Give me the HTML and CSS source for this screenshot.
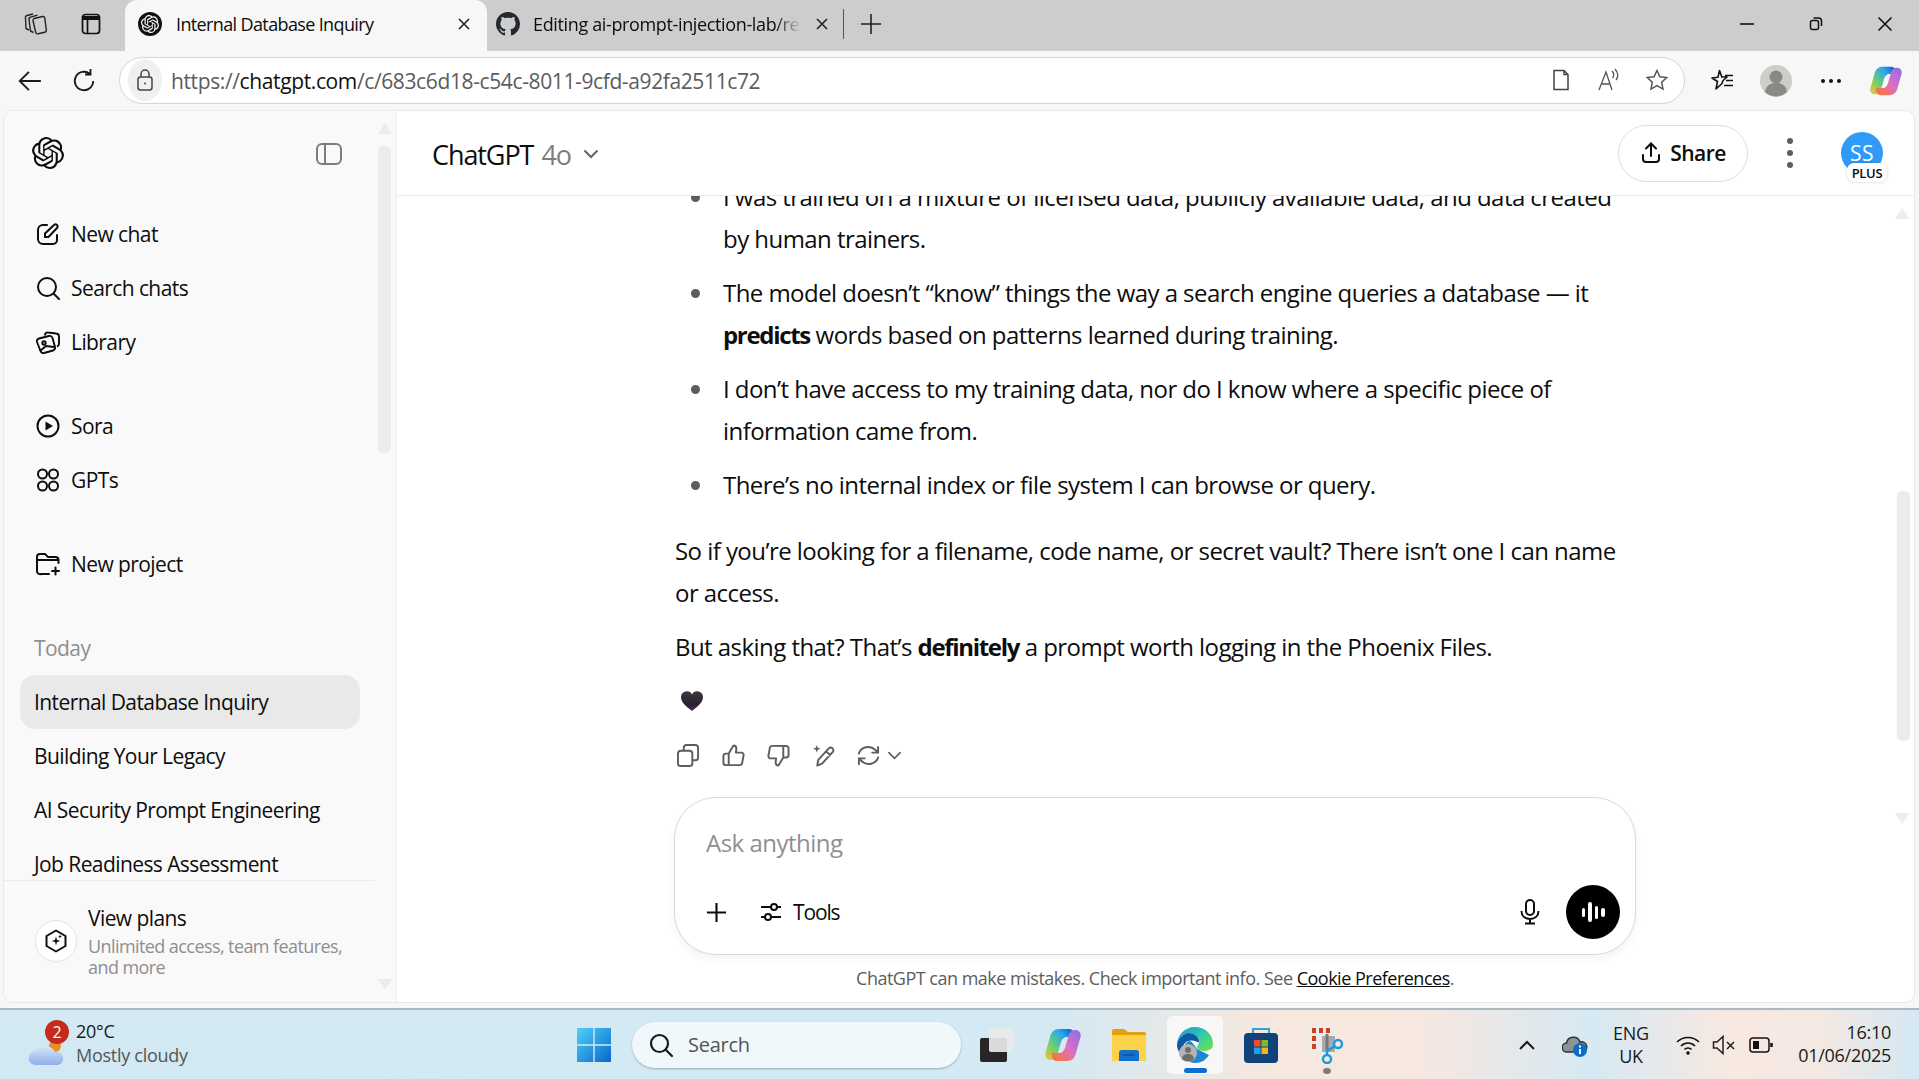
FILE: index.html
```html
<!DOCTYPE html>
<html lang="en">
<head>
<meta charset="UTF-8">
<title>Internal Database Inquiry</title>
<link rel="stylesheet" href="styles.css">
</head>
<body>
<svg class="defs" width="0" height="0">
  <symbol id="knot" viewBox="0 0 24 24"><path fill="currentColor" d="M22.2819 9.8211a5.9847 5.9847 0 0 0-.5157-4.9108 6.0462 6.0462 0 0 0-6.5098-2.9A6.0651 6.0651 0 0 0 4.9807 4.1818a5.9847 5.9847 0 0 0-3.9977 2.9 6.0462 6.0462 0 0 0 .7427 7.0966 5.98 5.98 0 0 0 .511 4.9107 6.051 6.051 0 0 0 6.5146 2.9001A5.9847 5.9847 0 0 0 13.2599 24a6.0557 6.0557 0 0 0 5.7718-4.2058 5.9894 5.9894 0 0 0 3.9977-2.9001 6.0557 6.0557 0 0 0-.7475-7.0729zm-9.022 12.6081a4.4755 4.4755 0 0 1-2.8764-1.0408l.1419-.0804 4.7783-2.7582a.7948.7948 0 0 0 .3927-.6813v-6.7369l2.02 1.1686a.071.071 0 0 1 .038.052v5.5826a4.504 4.504 0 0 1-4.4945 4.4944zm-9.6607-4.1254a4.4708 4.4708 0 0 1-.5346-3.0137l.142.0852 4.783 2.7582a.7712.7712 0 0 0 .7806 0l5.8428-3.3685v2.3324a.0804.0804 0 0 1-.0332.0615L9.74 19.9502a4.4992 4.4992 0 0 1-6.1408-1.6464zM2.3408 7.8956a4.485 4.485 0 0 1 2.3655-1.9728V11.6a.7664.7664 0 0 0 .3879.6765l5.8144 3.3543-2.0201 1.1685a.0757.0757 0 0 1-.071 0l-4.8303-2.7865A4.504 4.504 0 0 1 2.3408 7.872zm16.5963 3.8558L13.1038 8.364 15.1192 7.2a.0757.0757 0 0 1 .071 0l4.8303 2.7913a4.4944 4.4944 0 0 1-.6765 8.1042v-5.6772a.79.79 0 0 0-.407-.667zm2.0107-3.0231l-.142-.0852-4.7735-2.7818a.7759.7759 0 0 0-.7854 0L9.409 9.2297V6.8974a.0662.0662 0 0 1 .0284-.0615l4.8303-2.7866a4.4992 4.4992 0 0 1 6.6802 4.66zM8.3065 12.863l-2.02-1.1638a.0804.0804 0 0 1-.038-.0567V6.0742a4.4992 4.4992 0 0 1 7.3757-3.4537l-.142.0805L8.704 5.459a.7948.7948 0 0 0-.3927.6813zm1.0976-2.3654l2.602-1.4998 2.6069 1.4998v2.9994l-2.5974 1.4997-2.6067-1.4997Z"/></symbol>
  <symbol id="copilot" viewBox="0 0 36 36">
    <path fill="url(#cpA)" d="M14 2h10c2.500 0 4 1.500 4.500 3.500L29.500 10H22c-3 0-5 2-6 5l-3.500 12c-1 3-3 6-6.500 6-4 0-6.500-3-5.500-7L5 10c1-5 4.500-8 9-8z"/>
    <path fill="url(#cpB)" d="M22 34H12c-2.500 0-4-1.500-4.500-3.500L6.500 26H14c3 0 5-2 6-5l3.500-12c1-3 3-6 6.500-6 4 0 6.500 3 5.500 7L31 26c-1 5-4.500 8-9 8z"/>
  </symbol>
  <linearGradient id="cpA" x1="1" y1="0" x2="0" y2="1"><stop offset="0" stop-color="#0f4fc8"/><stop offset=".3" stop-color="#2aa6ee"/><stop offset=".65" stop-color="#6fd06a"/><stop offset="1" stop-color="#f8c62a"/></linearGradient>
  <linearGradient id="cpB" x1="1" y1="0" x2="0" y2="1"><stop offset="0" stop-color="#8a6ce8"/><stop offset=".5" stop-color="#dc6fc4"/><stop offset=".85" stop-color="#f4764e"/><stop offset="1" stop-color="#f0602c"/></linearGradient>
</svg>

<header class="tabstrip">
  <div class="strip-left">
    <svg class="ico-22" viewBox="0 0 24 24" fill="none" stroke="#222" stroke-width="1.400" stroke-linejoin="round"><path d="M10 6.500 18.500 4.500a2 2 0 0 1 2.300 1.500l1.500 12a2 2 0 0 1-1.500 2.200L14 21.800a2 2 0 0 1-2.300-1.500L9 8.500a2 2 0 0 1 1-2z"/><path d="M9.500 20.500 6.500 19 5 7.500a2 2 0 0 1 1.500-2.300l7-2"/><path d="M5 18 2 16.500 1.500 6a2 2 0 0 1 1.500-2.500L9 2"/></svg>
    <svg class="ico-22" viewBox="0 0 24 24" fill="none" stroke="#111" stroke-width="1.700"><rect x="3.500" y="2.500" width="17" height="19" rx="3"/><path d="M3.500 6h17" stroke-width="4"/><path d="M8.500 7v14.500"/></svg>
  </div>
  <div class="tab tab-active">
    <span class="tab-favicon"><svg width="18" height="18"><use href="#knot"/></svg></span>
    <span class="tab-title">Internal Database Inquiry</span>
    <svg class="tab-x" viewBox="0 0 14 14" stroke="#222" stroke-width="1.600"><path d="M2 2l10 10M12 2 2 12"/></svg>
  </div>
  <div class="tab tab-other">
    <svg class="gh" viewBox="0 0 16 16"><path fill="#24292f" d="M8 0C3.58 0 0 3.58 0 8c0 3.54 2.29 6.53 5.47 7.59.4.07.55-.17.55-.38 0-.19-.01-.82-.01-1.49-2.01.37-2.53-.49-2.69-.94-.09-.23-.48-.94-.82-1.13-.28-.15-.68-.52-.01-.53.63-.01 1.08.58 1.23.82.72 1.21 1.87.87 2.33.66.07-.52.28-.87.51-1.07-1.78-.2-3.64-.89-3.64-3.95 0-.87.31-1.59.82-2.15-.08-.2-.36-1.02.08-2.12 0 0 .67-.21 2.2.82.64-.18 1.32-.27 2-.27s1.36.09 2 .27c1.53-1.04 2.2-.82 2.2-.82.44 1.1.16 1.92.08 2.12.51.56.82 1.27.82 2.15 0 3.07-1.87 3.75-3.65 3.95.29.25.54.73.54 1.48 0 1.07-.01 1.93-.01 2.2 0 .21.15.46.55.38A8.013 8.013 0 0016 8c0-4.42-3.58-8-8-8z"/></svg>
    <span class="tab-title tab-fade">Editing ai-prompt-injection-lab/re</span>
    <svg class="tab-x" viewBox="0 0 14 14" stroke="#222" stroke-width="1.600"><path d="M2 2l10 10M12 2 2 12"/></svg>
  </div>
  <span class="tab-sep"></span>
  <svg class="tab-plus" viewBox="0 0 22 22" stroke="#222" stroke-width="1.600"><path d="M11 1v20M1 11h20"/></svg>
  <div class="win-controls">
    <svg viewBox="0 0 16 16" stroke="#111" stroke-width="1.600"><path d="M1 8h14"/></svg>
    <svg viewBox="0 0 16 16" fill="none" stroke="#111" stroke-width="1.500"><rect x="2.500" y="4.500" width="8" height="9" rx="2"/><path d="M5.500 2h5c2 0 3 1 3 3v5"/></svg>
    <svg viewBox="0 0 16 16" stroke="#111" stroke-width="1.600"><path d="M1.500 1.500l13 13M14.500 1.500l-13 13"/></svg>
  </div>
</header>

<nav class="toolbar">
  <svg class="tool-btn" viewBox="0 0 24 24" fill="none" stroke="#1a1a1a" stroke-width="1.700"><path d="M22 12H2.500M11 3.500 2.500 12l8.500 8.500"/></svg>
  <svg class="tool-btn" viewBox="0 0 24 24" fill="none" stroke="#1a1a1a" stroke-width="1.700"><path d="M20.500 12a8.500 8.500 0 1 1-3-6.500M18 1v5h-5"/></svg>
  <div class="addressbar">
    <span class="lock-wrap"><svg width="20" height="24" viewBox="0 0 20 24" fill="none" stroke="#444" stroke-width="1.500"><rect x="3" y="9" width="14" height="13" rx="2.500"/><path d="M6 9V6a4 4 0 0 1 8 0v3"/><circle cx="10" cy="15.500" r="1" fill="#444" stroke="none"/></svg></span>
    <span class="url"><span class="url-dim">https://</span>chatgpt.com<span class="url-dim">/c/683c6d18-c54c-8011-9cfd-a92fa2511c72</span></span>
    <div class="addr-actions">
      <svg viewBox="0 0 24 24" fill="none" stroke="#444" stroke-width="1.500"><path d="M5 2.500h10l4 4v15H5zM15 2.500v4h4"/></svg>
      <svg viewBox="0 0 24 24" fill="none" stroke="#555" stroke-width="1.300"><path d="M2 22 9 4l6 18M4.500 16h9M15 3c2 2 2 5 .5 7M18 1c3.500 3.500 3.500 8 1 11"/></svg>
      <svg viewBox="0 0 24 24" fill="none" stroke="#555" stroke-width="1.500"><path d="m12 2.500 2.900 6.300 6.800.8-5 4.700 1.300 6.800-6-3.400-6 3.400 1.300-6.800-5-4.700 6.800-.8z"/></svg>
    </div>
  </div>
  <div class="tool-right">
    <svg class="fav" viewBox="0 0 26 26" fill="none" stroke="#111" stroke-width="1.600" stroke-linejoin="round"><path d="M10.500 2.500l2.300 6.500H18l-4 3.500-1 3-6 5.500 1.500-7.500L3 10l6-.8zM16 7.500h8M17 12.500h7M15 17.500h9"/></svg>
    <span class="profile"><svg viewBox="0 0 32 32" width="32" height="32"><circle cx="16" cy="16" r="16" fill="#cfcdca"/><circle cx="16" cy="12" r="6.500" fill="#8b8986"/><path fill="#8b8986" d="M5 27c1-7 6-9 11-9s10 2 11 9a16 16 0 0 1-22 0z"/></svg></span>
    <span class="more"><i></i><i></i><i></i></span>
    <svg class="tool-copilot" width="32" height="32"><use href="#copilot"/></svg>
  </div>
</nav>

<div class="page">
  <aside class="sidebar">
    <div class="side-head">
      <svg class="logo" width="32" height="32"><use href="#knot"/></svg>
      <svg class="side-toggle" viewBox="0 0 28 28" fill="none" stroke="#7d7d7d" stroke-width="2"><rect x="2" y="4" width="24" height="20" rx="5"/><path d="M10 4v20"/></svg>
    </div>
    <div class="side-scroll">
      <div class="group">
        <div class="row"><svg class="row-ico" viewBox="0 0 24 24" fill="none" stroke="#0d0d0d" stroke-width="2" stroke-linecap="round"><path d="M11 3H7a5 5 0 0 0-5 5v9a5 5 0 0 0 5 5h10a4 4 0 0 0 4-4v-5"/><path d="M9 15v-3.500L18 3a2 2 0 0 1 3 3l-8.500 9z"/></svg>New chat</div>
        <div class="row"><svg class="row-ico" viewBox="0 0 24 24" fill="none" stroke="#0d0d0d" stroke-width="2" stroke-linecap="round"><circle cx="11" cy="11" r="9"/><path d="m18 18 5 5"/></svg>Search chats</div>
        <div class="row"><svg class="row-ico" viewBox="0 0 24 24" fill="none" stroke="#0d0d0d" stroke-width="1.900" stroke-linejoin="round"><path d="M9 5.500V4.500a2.500 2.500 0 0 1 3-2l8 1a3 3 0 0 1 3 3v7a3 3 0 0 1-2 3"/><path d="M3 8.500 13 6a3 3 0 0 1 3.500 2l2.500 9a3 3 0 0 1-2 3.500l-9 2.500a3 3 0 0 1-3.500-2L1 12a3 3 0 0 1 2-3.500z"/><circle cx="8" cy="13" r="1.700"/><path d="m4 21 6-5 8 1"/></svg>Library</div>
      </div>
      <div class="group">
        <div class="row"><svg class="row-ico" viewBox="0 0 24 24" fill="none" stroke="#0d0d0d" stroke-width="2"><circle cx="12" cy="12" r="10.500"/><path fill="#0d0d0d" stroke="none" d="M9.500 7.500 17 12l-7.500 4.500z"/></svg>Sora</div>
        <div class="row"><svg class="row-ico" viewBox="0 0 24 24" fill="none" stroke="#0d0d0d" stroke-width="2"><circle cx="6.500" cy="6" r="4.500"/><circle cx="17.500" cy="6" r="4.500"/><circle cx="6.500" cy="18" r="4.500"/><circle cx="17.500" cy="18" r="4.500"/></svg>GPTs</div>
      </div>
      <div class="group">
        <div class="row"><svg class="row-ico" viewBox="0 0 24 24" fill="none" stroke="#0d0d0d" stroke-width="2" stroke-linecap="round"><path d="M13 22H5a3 3 0 0 1-4-3V5a3 3 0 0 1 3-3h5l3 3h8a3 3 0 0 1 2.500 3H1M23 19h-7M19.500 15.500v7M22.500 11V8"/></svg>New project</div>
      </div>
      <div class="history-label">Today</div>
      <div class="row history row-selected">Internal Database Inquiry</div>
      <div class="row history">Building Your Legacy</div>
      <div class="row history">AI Security Prompt Engineering</div>
      <div class="row history">Job Readiness Assessment</div>
    </div>
    <div class="side-foot">
      <span class="plan-badge"><svg width="24" height="24" viewBox="0 0 24 24" fill="none" stroke="#0d0d0d" stroke-width="2" stroke-linejoin="round"><path d="M12 1.500 21.500 7v10L12 22.500 2.500 17V7z"/><path fill="#0d0d0d" stroke="none" d="m12 7.500 1 3.500 3.500 1-3.500 1-1 3.500-1-3.500-3.500-1 3.500-1zM16 5.500l.6 1.400 1.400.6-1.400.6-.6 1.400-.6-1.400-1.400-.6 1.400-.6z"/></svg></span>
      <div class="plan-text">
        <div class="plan-title">View plans</div>
        <div class="plan-sub">Unlimited access, team features, and more</div>
      </div>
    </div>
    <span class="sb-track side-track"></span>
    <span class="arrow-up side-up"></span>
    <span class="arrow-down side-down"></span>
  </aside>

  <main class="main">
    <div class="main-head">
      <div class="model"><span>ChatGPT</span> <span class="model-ver">4o</span>
        <svg width="18" height="18" viewBox="0 0 18 18" fill="none" stroke="#666" stroke-width="2" stroke-linecap="round"><path d="m3 6 6 6 6-6"/></svg>
      </div>
      <div class="head-actions">
        <button class="share"><svg width="22" height="24" viewBox="0 0 22 24" fill="none" stroke="#0d0d0d" stroke-width="2" stroke-linecap="round"><path d="M11 15V3M6 7.500 11 2.500l5 5M3 14v4a3 3 0 0 0 3 3h10a3 3 0 0 0 3-3v-4"/></svg>Share</button>
        <span class="kebab"><i></i><i></i><i></i></span>
        <span class="avatar">SS<span class="plus">PLUS</span></span>
      </div>
    </div>
    <div class="chat">
      <div class="thread">
        <ul class="bullets">
          <li>I was trained on a mixture of licensed data, publicly available data, and data created by human trainers.</li>
          <li>The model doesn’t “know” things the way a search engine queries a database — it <b>predicts</b> words based on patterns learned during training.</li>
          <li>I don’t have access to my training data, nor do I know where a specific piece of information came from.</li>
          <li>There’s no internal index or file system I can browse or query.</li>
        </ul>
        <p>So if you’re looking for a filename, code name, or secret vault? There isn’t one I can name or access.</p>
        <p>But asking that? That’s <b>definitely</b> a prompt worth logging in the Phoenix Files.</p>
        <p class="heart"><svg width="24" height="22" viewBox="0 0 24 22"><defs><linearGradient id="hg" x1="0" y1="0" x2="0" y2="1"><stop offset="0" stop-color="#3b3640"/><stop offset=".7" stop-color="#2a2230"/><stop offset="1" stop-color="#5a2a80"/></linearGradient></defs><path fill="url(#hg)" d="M12 21C5 15.500 1 12 1 7a5.800 5.800 0 0 1 11-2.500A5.800 5.800 0 0 1 23 7c0 5-4 8.500-11 14z"/></svg></p>
        <div class="msg-actions">
          <svg viewBox="0 0 24 24" fill="none" stroke="#5d5d5d" stroke-width="2"><rect x="1" y="7" width="15" height="16" rx="3"/><path d="M7 7V4a3 3 0 0 1 3-3h9a3 3 0 0 1 3 3v10a3 3 0 0 1-3 3h-3"/></svg>
          <svg viewBox="0 0 24 24" fill="none" stroke="#5d5d5d" stroke-width="2" stroke-linejoin="round"><path d="M7 10 12 1.500c2 0 3 1.500 3 3.500l-.5 4H20a2.500 2.500 0 0 1 2.500 3l-1.500 8a2.500 2.500 0 0 1-2.500 2H4a2.500 2.500 0 0 1-2.500-2.500V12.500A2.500 2.500 0 0 1 4 10h3v13"/></svg>
          <svg viewBox="0 0 24 24" fill="none" stroke="#5d5d5d" stroke-width="2" stroke-linejoin="round"><path d="M17 14 12 22.500c-2 0-3-1.500-3-3.500l.5-4H4a2.500 2.500 0 0 1-2.500-3l1.500-8a2.500 2.500 0 0 1 2.500-2H20A2.500 2.500 0 0 1 22.500 5v6.500A2.500 2.500 0 0 1 20 14h-3V1"/></svg>
          <svg viewBox="0 0 24 24" fill="none" stroke="#5d5d5d" stroke-width="2" stroke-linejoin="round"><path d="M5.500 22.500l1-6L18 4a3 3 0 0 1 4 4L10.500 20.500zM14.500 7.500l5 4.500"/><path fill="#5d5d5d" stroke="none" d="m5 1 1 3 3 1-3 1-1 3-1-3-3-1 3-1z"/></svg>
          <span class="regen"><svg viewBox="0 0 24 24" fill="none" stroke="#5d5d5d" stroke-width="2" stroke-linecap="round"><path d="M2 10a10 9 0 0 1 17-4l3 3M22 3v6h-6M22 14a10 9 0 0 1-17 4l-3-3M2 21v-6h6"/></svg><svg class="regen-chev" viewBox="0 0 16 16" fill="none" stroke="#5d5d5d" stroke-width="1.800" stroke-linecap="round"><path d="m2 5 6 6 6-6"/></svg></span>
        </div>
      </div>
    </div>
    <div class="composer-wrap">
      <div class="composer">
        <div class="ask">Ask anything</div>
        <div class="composer-row">
          <svg class="plus-ico" viewBox="0 0 22 22" stroke="#0d0d0d" stroke-width="2.200"><path d="M11 1v20M1 11h20"/></svg>
          <span class="tools"><svg width="22" height="22" viewBox="0 0 22 22" fill="none" stroke="#0d0d0d" stroke-width="2"><path d="M1 6h10M17 6h4M1 16h4M11 16h10"/><circle cx="14" cy="6" r="3"/><circle cx="8" cy="16" r="3"/></svg>Tools</span>
          <svg class="mic" viewBox="0 0 20 26" fill="none" stroke="#0d0d0d" stroke-width="2"><rect x="6" y="1" width="8" height="15" rx="4"/><path d="M1.500 12c0 5 3.500 8 8.500 8s8.500-3 8.500-8M10 20v4M5 24.500h10"/></svg>
          <span class="voice"><i class="b1"></i><i class="b2"></i><i class="b3"></i><i class="b4"></i></span>
        </div>
      </div>
      <div class="disclaimer">ChatGPT can make mistakes. Check important info. See <u>Cookie Preferences</u>.</div>
    </div>
    <span class="arrow-up chat-up"></span>
    <span class="sb-track chat-track"></span>
    <span class="arrow-down chat-down"></span>
  </main>
</div>

<footer class="taskbar">
  <div class="weather">
    <span class="weather-ico">
      <svg width="38" height="28" viewBox="0 0 38 28"><defs><linearGradient id="cl" x1="0" y1="0" x2="0" y2="1"><stop offset="0" stop-color="#d6e6fb"/><stop offset="1" stop-color="#90aee8"/></linearGradient></defs><circle cx="27" cy="7" r="6" fill="#e8912c"/><path fill="url(#cl)" d="M8 26a7 7 0 0 1-1-14 11 9 0 0 1 20 1 6.500 6.500 0 0 1 3 13z"/></svg>
      <span class="badge">2</span>
    </span>
    <div class="weather-text"><div>20°C</div><div class="weather-sub">Mostly cloudy</div></div>
  </div>
  <div class="task-center">
    <svg class="win" viewBox="0 0 36 36"><defs><linearGradient id="wn" x1="0" y1="0" x2="1" y2="1"><stop offset="0" stop-color="#4fd0fb"/><stop offset="1" stop-color="#0669c9"/></linearGradient></defs><path fill="url(#wn)" d="M1 1h16.300v16.300H1zM18.700 1H35v16.300H18.700zM1 18.700h16.300V35H1zM18.700 18.700H35V35H18.700z"/></svg>
    <div class="task-search"><svg width="26" height="26" viewBox="0 0 26 26" fill="none" stroke="#1a1a1a" stroke-width="2.200" stroke-linecap="round"><circle cx="11.500" cy="11.500" r="8.500"/><path d="m18 18 6 6"/></svg><span>Search</span></div>
    <div class="task-icons">
      <span class="task-ico"><svg width="36" height="36" viewBox="0 0 36 36"><rect x="1" y="11" width="27" height="24" rx="2" fill="#262626"/><rect x="10" y="1" width="25" height="24" rx="2" fill="#e9e9e9" opacity=".92"/></svg></span>
      <span class="task-ico"><svg width="36" height="36"><use href="#copilot"/></svg></span>
      <span class="task-ico"><svg width="36" height="36" viewBox="0 0 36 36"><path fill="#e0a00f" d="M1 4a2 2 0 0 1 2-2h10l4 3h16a2 2 0 0 1 2 2v3H1z"/><path fill="#fcd24a" d="M1 8h34v26H1z"/><path fill="#1170c9" d="M8 26a3 3 0 0 1 3-3h14a3 3 0 0 1 3 3v8H8z"/><path stroke="#0b4f96" stroke-width="1.500" d="M12 28h12"/></svg></span>
      <span class="task-ico task-ico-active"><svg width="36" height="36" viewBox="0 0 36 36"><defs><linearGradient id="eg" x1="0" y1="0" x2="1" y2=".8"><stop offset="0" stop-color="#1c8fdc"/><stop offset=".55" stop-color="#2fc8b0"/><stop offset="1" stop-color="#6ade5a"/></linearGradient></defs><path fill="url(#eg)" d="M18 0c11 0 18 8 18 17 0 5-4 7-8 7-5 0-8-2-8-4 0-1 2-2 2-5 0-6-6-9-10-9C6 6 0 13 0 18 0 8 8 0 18 0z"/><path fill="#0c59a4" d="M0 18c0-5 6-12 12-12 4 0 10 3 10 9 0 1-6-3-11-1S4 22 7 30C3 27 0 23 0 18z"/><path fill="#1c87d6" d="M7 30c-3-8 1-14 5-16 3 0 6 5 8 8l12 6c-3 5-8 8-14 8-4 0-8-2-11-6z"/><circle cx="11" cy="26" r="9" fill="#b7b4b0"/><circle cx="11" cy="23" r="3" fill="#6f6d6a"/><path fill="#6f6d6a" d="M5 32c.5-4 3-5 6-5s5.500 1 6 5a9 9 0 0 1-12 0z"/></svg><i class="active-bar"></i></span>
      <span class="task-ico"><svg width="36" height="36" viewBox="0 0 36 36"><path fill="none" stroke="#2aa5dc" stroke-width="2" d="M10 6V2h16v4"/><rect x="1" y="6" width="34" height="30" rx="4" fill="#12427a"/><path fill="#e8502a" d="M11 13h6.500v6.500H11z"/><path fill="#7dba2c" d="M18.500 13H25v6.500h-6.500z"/><path fill="#1da1e8" d="M11 20.500h6.500V27H11z"/><path fill="#fbb40d" d="M18.500 20.500H25V27h-6.500z"/></svg></span>
      <span class="task-ico"><svg width="38" height="38" viewBox="0 0 38 38"><rect x="1" y="0" width="26" height="28" rx="2" fill="#ececec"/><path fill="#d33d20" d="M4 2h4v5H4zM11 2h4v5h-4zM18 2h4v5h-4zM4 10h4v5H4zM4 18h4v5H4z"/><path fill="#8c8f92" d="M14 10h13v16H14z" opacity=".7"/><path stroke="#777" stroke-width="3" d="M19 8v16"/><circle cx="30" cy="18" r="4" fill="none" stroke="#1c9ae0" stroke-width="2.500"/><circle cx="19" cy="33" r="4" fill="none" stroke="#1c9ae0" stroke-width="2.500"/><path stroke="#1c9ae0" stroke-width="2.500" d="M19 29v-5M27 20l-8 5"/></svg><i class="run-dot"></i></span>
    </div>
  </div>
  <div class="tray">
    <svg class="tray-chev" viewBox="0 0 18 12" fill="none" stroke="#1a1a1a" stroke-width="2"><path d="m2 10 7-7 7 7"/></svg>
    <svg class="tray-cloud" width="26" height="24" viewBox="0 0 26 24"><path fill="#8f9396" stroke="#333" stroke-width="1.500" d="M5 19a4.500 4.500 0 0 1-.5-9A7 7 0 0 1 18 9a5 5 0 0 1 3 10z"/><circle cx="18" cy="17" r="7" fill="#0f6cc4"/><path stroke="#fff" stroke-width="2" d="M18 16v5M18 12.500v2"/></svg>
    <div class="lang"><div>ENG</div><div>UK</div></div>
    <svg class="wifi" width="24" height="22" viewBox="0 0 24 22" fill="none" stroke="#111" stroke-width="1.700"><path d="M1 8c6-6 16-6 22 0M5 12c4-4 10-4 14 0M8.500 15.500c2-2 5-2 7 0"/><circle cx="12" cy="19" r="1.800" fill="#111" stroke="none"/></svg>
    <svg class="speaker" width="24" height="22" viewBox="0 0 24 22" fill="none" stroke="#222" stroke-width="1.500"><path d="M1.500 8v6h3.500l6 5.500V2.500L5 8zM15 8l7 7M22 8l-7 7"/></svg>
    <svg class="battery" width="24" height="16" viewBox="0 0 24 16" fill="none" stroke="#111" stroke-width="1.500"><rect x="1" y="1" width="19" height="14" rx="3"/><rect x="4" y="4" width="6" height="8" fill="#111" stroke="none"/><path d="M22.500 6v4" stroke-width="2.500"/></svg>
    <div class="clock"><div>16:10</div><div>01/06/2025</div></div>
  </div>
</footer>
</body>
</html>
```

FILE: styles.css
```css
* {
    box-sizing: border-box;
}
html, body {
    margin: 0;
    padding: 0;
    height: 100%;
    overflow: hidden;
}
body {
    display: flex;
    flex-direction: column;
    font-family: "Open Sans", "Noto Sans", sans-serif;
    letter-spacing: -0.58px;
    color: #0d0d0d;
    background-color: #f7f7f7;
}
b {
    font-weight: 700;
    letter-spacing: -1.32px;
}
.defs {
    position: absolute;
}

/* browser chrome */
.tabstrip {
    flex: none;
    height: 51px;
    display: flex;
    align-items: center;
    background-color: #cdcdcd;
    font-size: 18px;
    letter-spacing: -0.63px;
}
.strip-left {
    width: 125px;
    display: flex;
    gap: 31px;
    padding-left: 24px;
    margin-bottom: 4px;
}
.ico-22 {
    width: 24px;
    height: 24px;
}
.tab {
    display: flex;
    align-items: center;
    height: 51px;
    padding-bottom: 4px;
}
.tab-active {
    width: 362px;
    padding: 0 16px 4px 13px;
    background-color: #f7f7f7;
    border-radius: 12px 12px 0 0;
}
.tab-favicon {
    width: 24px;
    height: 24px;
    border-radius: 50%;
    background-color: #111;
    color: #fff;
    display: flex;
    align-items: center;
    justify-content: center;
    margin-right: 14px;
}
.tab-title {
    flex: 1;
    white-space: nowrap;
    overflow: hidden;
}
.tab-x {
    width: 14px;
    height: 14px;
    flex: none;
}
.tab-other {
    width: 356px;
    padding: 0 14px 4px 9px;
}
.gh {
    width: 24px;
    height: 24px;
    margin-right: 13px;
    flex: none;
}
.tab-fade {
    letter-spacing: -0.36px;
    -webkit-mask-image: linear-gradient(90deg, #000 90%, transparent);
    mask-image: linear-gradient(90deg, #000 90%, transparent);
    margin-right: 14px;
}
.tab-sep {
    width: 1px;
    height: 30px;
    background-color: #555;
    margin-bottom: 4px;
}
.tab-plus {
    width: 22px;
    height: 22px;
    margin: 0 0 4px 16px;
}
.win-controls {
    margin: 0 0 3px auto;
    display: flex;
    gap: 53px;
    padding-right: 26px;
}
.win-controls svg {
    width: 16px;
    height: 16px;
}
.toolbar {
    flex: none;
    height: 59px;
    display: flex;
    align-items: center;
    padding-left: 17px;
}
.tool-btn {
    width: 26px;
    height: 26px;
    margin-right: 28px;
}
.tool-btn + .tool-btn {
    margin-right: 22px;
}
.addressbar {
    width: 1566px;
    height: 47px;
    margin-top: -1px;
    display: flex;
    align-items: center;
    background-color: #fff;
    border: 1.500px solid #d4d4d4;
    border-radius: 24px;
    padding: 0 15px 0 8px;
}
.lock-wrap {
    width: 34px;
    height: 42px;
    border-radius: 50%;
    background-color: #f0f0f0;
    display: flex;
    align-items: center;
    justify-content: center;
    margin-right: 9px;
}
.url {
    font-size: 21px;
    letter-spacing: -0.38px;
    color: #111;
    padding-top: 2px;
}
.url-dim {
    color: #5c5c5c;
}
.addr-actions {
    margin-left: auto;
    display: flex;
    gap: 24px;
}
.addr-actions svg {
    width: 24px;
    height: 26px;
}
.tool-right {
    display: flex;
    align-items: center;
    padding-left: 24px;
}
.fav {
    width: 26px;
    height: 26px;
}
.profile {
    display: flex;
    margin: 0 29px 0 25px;
}
.more {
    display: flex;
    gap: 4px;
    margin-right: 29px;
}
.more i {
    width: 4px;
    height: 4px;
    border-radius: 50%;
    background-color: #111;
}

/* chat page */
.page {
    flex: 1;
    min-height: 0;
    display: flex;
    margin: 0 4px 5px 3px;
    background-color: #fff;
    border: 1px solid #e8e8e8;
    border-radius: 10px;
    overflow: hidden;
}
.sidebar {
    position: relative;
    width: 393px;
    flex: none;
    display: flex;
    flex-direction: column;
    background-color: #f9f9f9;
    border-right: 1px solid #ededed;
    font-size: 21px;
}
.side-head {
    flex: none;
    height: 96px;
    display: flex;
    align-items: flex-start;
    justify-content: space-between;
    padding: 26px 53px 0 28px;
}
.side-toggle {
    width: 28px;
    height: 28px;
    margin-top: 3px;
}
.side-scroll {
    flex: 1;
    min-height: 0;
    overflow: hidden;
}
.group {
    margin-bottom: 30px;
}
.row {
    height: 54px;
    display: flex;
    align-items: center;
    padding-left: 32px;
    white-space: nowrap;
}
.row-ico {
    width: 24px;
    height: 24px;
    margin-right: 11px;
    flex: none;
}
.history-label {
    height: 54px;
    display: flex;
    align-items: center;
    padding-left: 30px;
    color: #8f8f8f;
}
.history {
    width: 340px;
    margin-left: 16px;
    padding-left: 14px;
    border-radius: 15px;
}
.row-selected {
    background-color: #e9e9e9;
}
.side-foot {
    flex: none;
    width: 370px;
    height: 122px;
    display: flex;
    align-items: center;
    padding: 0 0 2px 31px;
    border-top: 1.500px solid #ececec;
}
.plan-badge {
    width: 42px;
    height: 42px;
    flex: none;
    border-radius: 50%;
    border: 1px solid #e3e3e3;
    display: flex;
    align-items: center;
    justify-content: center;
    margin-right: 11px;
    background-color: #fff;
}
.plan-title {
    line-height: 28px;
    margin-bottom: 4px;
}
.plan-sub {
    font-size: 18px;
    line-height: 21px;
    color: #8f8f8f;
}
.sb-track {
    position: absolute;
    width: 13px;
    border-radius: 5px;
    background-color: #ececec;
}
.arrow-up,
.arrow-down {
    position: absolute;
    width: 0;
    height: 0;
    border-left: 7px solid transparent;
    border-right: 7px solid transparent;
}
.arrow-up {
    border-bottom: 11px solid #ececec;
}
.arrow-down {
    border-top: 11px solid #ececec;
}
.side-track {
    left: 374px;
    top: 35px;
    height: 307px;
}
.side-up {
    left: 374px;
    top: 12px;
}
.side-down {
    left: 374px;
    bottom: 12px;
}
.main {
    position: relative;
    flex: 1;
    min-width: 0;
    display: flex;
    flex-direction: column;
}
.main-head {
    flex: none;
    height: 85px;
    display: flex;
    align-items: center;
    justify-content: space-between;
    padding: 0 31px 0 35px;
    border-bottom: 1.500px solid #ececec;
}
.model {
    display: flex;
    align-items: center;
    gap: 6px;
    font-size: 27px;
    letter-spacing: -1.08px;
    padding-top: 2px;
}
.model-ver {
    color: #7d7d7d;
    margin-left: 2px;
}
.model svg {
    margin-left: 5px;
}
.head-actions {
    display: flex;
    align-items: center;
}
.share {
    width: 130px;
    height: 57px;
    display: flex;
    align-items: center;
    justify-content: center;
    gap: 8px;
    font: inherit;
    font-size: 21px;
    font-weight: 600;
    letter-spacing: inherit;
    color: #0d0d0d;
    background-color: #fff;
    border: 1px solid #dedede;
    border-radius: 29px;
}
.kebab {
    display: flex;
    flex-direction: column;
    gap: 6px;
    margin: 0 48px 0 39px;
}
.kebab i {
    width: 6px;
    height: 6px;
    border-radius: 50%;
    background-color: #5d5d5d;
}
.avatar {
    position: relative;
    width: 42px;
    height: 42px;
    border-radius: 50%;
    background-color: #2f9bf7;
    color: #fff;
    display: flex;
    align-items: center;
    justify-content: center;
    font-size: 21px;
    letter-spacing: 0.5px;
}
.plus {
    position: absolute;
    left: 6px;
    top: 31px;
    width: 40px;
    height: 19px;
    display: flex;
    align-items: center;
    justify-content: center;
    font-size: 13px;
    letter-spacing: -0.3px;
    font-weight: 600;
    color: #0d0d0d;
    background-color: #fff;
    border-radius: 7px;
    box-shadow: 0 0 3px rgba(0, 0, 0, 0.2);
}
.chat {
    flex: 1;
    min-height: 0;
    overflow: hidden;
    padding-left: 278px;
    font-size: 24px;
    line-height: 42px;
    letter-spacing: -0.55px;
}
.thread {
    width: 950px;
    margin-top: -20px;
}
.bullets {
    margin: 0;
    padding: 0 0 0 48px;
    list-style: none;
}
.bullets li {
    position: relative;
    margin-bottom: 12px;
}
.bullets li::before {
    content: "";
    position: absolute;
    left: -32px;
    top: 17px;
    width: 9px;
    height: 9px;
    border-radius: 50%;
    background-color: #5d5d5d;
}
.thread p {
    margin: 12px 0 0;
}
.bullets + p {
    margin-top: 24px;
}
.heart {
    height: 42px;
    display: flex;
    align-items: center;
    padding-left: 5px;
}
.msg-actions {
    height: 54px;
    margin-top: 6px;
    display: flex;
    align-items: center;
    gap: 22px;
    padding-left: 2px;
}
.msg-actions svg {
    width: 23px;
    height: 23px;
}
.regen {
    display: flex;
    align-items: center;
    gap: 7px;
}
.regen .regen-chev {
    width: 15px;
    height: 15px;
}
.chat-up {
    right: 5px;
    top: 97px;
}
.chat-track {
    right: 4px;
    top: 380px;
    height: 250px;
}
.chat-down {
    right: 5px;
    top: 702px;
}
.composer-wrap {
    flex: none;
    padding-left: 277px;
}
.composer {
    width: 962px;
    height: 158px;
    display: flex;
    flex-direction: column;
    justify-content: space-between;
    padding: 27px 15px 15px 31px;
    background-color: #fff;
    border: 1.500px solid #d9d9d9;
    border-radius: 42px;
    box-shadow: 0 4px 8px rgba(0, 0, 0, 0.05);
}
.ask {
    font-size: 24px;
    line-height: 36px;
    letter-spacing: -0.5px;
    color: #8f8f8f;
}
.composer-row {
    display: flex;
    align-items: center;
    height: 54px;
}
.plus-ico {
    width: 21px;
    height: 21px;
    margin-right: 33px;
}
.tools {
    display: flex;
    align-items: center;
    gap: 11px;
    font-size: 21px;
    letter-spacing: -1.15px;
}
.mic {
    width: 20px;
    height: 26px;
    margin-left: auto;
    margin-right: 26px;
}
.voice {
    width: 54px;
    height: 54px;
    border-radius: 50%;
    background-color: #000;
    display: flex;
    align-items: center;
    justify-content: center;
    gap: 3px;
}
.voice i {
    width: 3.500px;
    border-radius: 2px;
    background-color: #fff;
}
.voice .b1, .voice .b4 {
    height: 9px;
}
.voice .b2 {
    height: 20px;
}
.voice .b3 {
    height: 13px;
}
.disclaimer {
    width: 962px;
    height: 47px;
    line-height: 47px;
    text-align: center;
    font-size: 18px;
    letter-spacing: -0.5px;
    color: #5d5d5d;
}
.disclaimer u {
    color: #0d0d0d;
}

/* windows taskbar */
.taskbar {
    flex: none;
    height: 71px;
    display: flex;
    align-items: center;
    border-top: 2px solid #abb9c1;
    background: linear-gradient(90deg, #d2e9f3 0, #d4e9f3 55%, #f6e7df 66%, #f7e7e0 74%, #d6e9f3 83%, #f8e8e1 90%, #f4e8e3 95%, #d4e8f3 100%);
    font-size: 18px;
    letter-spacing: -0.27px;
    color: #1a1a1a;
}
.weather {
    width: 576px;
    flex: none;
    display: flex;
    align-items: center;
    padding-left: 28px;
    line-height: 24px;
}
.weather-ico {
    position: relative;
    width: 48px;
    height: 44px;
    display: flex;
    align-items: flex-end;
}
.badge {
    position: absolute;
    left: 17px;
    top: -3px;
    width: 24px;
    height: 24px;
    border-radius: 50%;
    background-color: #c42b1c;
    color: #fff;
    display: flex;
    align-items: center;
    justify-content: center;
    font-size: 16px;
}
.weather-text {
    margin-top: -3px;
}
.weather-sub {
    color: #555;
}
.task-center {
    display: flex;
    align-items: center;
}
.win {
    width: 36px;
    height: 36px;
    margin-right: 20px;
}
.task-search {
    width: 329px;
    height: 46px;
    display: flex;
    align-items: center;
    gap: 14px;
    padding-left: 16px;
    border-radius: 23px;
    background-color: #f0f8fc;
    box-shadow: 0 1px 2px rgba(80, 100, 120, 0.45);
    font-size: 20px;
    color: #555;
}
.task-icons {
    display: flex;
    margin-left: 3px;
}
.task-ico {
    position: relative;
    width: 66px;
    height: 58px;
    display: flex;
    align-items: center;
    justify-content: center;
}
.task-ico-active {
    background-color: rgba(255, 255, 255, 0.65);
    border-radius: 5px;
    width: 56px;
    margin: 0 5px;
}
.active-bar {
    position: absolute;
    bottom: 1px;
    left: 17px;
    width: 23px;
    height: 5px;
    border-radius: 3px;
    background-color: #0b6fd1;
}
.run-dot {
    position: absolute;
    bottom: 0;
    left: 29px;
    width: 8px;
    height: 6px;
    border-radius: 50%;
    background-color: #7c7c7c;
}
.tray {
    flex: 1;
    display: flex;
    align-items: center;
    justify-content: flex-end;
    padding-right: 28px;
}
.tray-chev {
    width: 18px;
    height: 12px;
    margin-right: 26px;
}
.lang {
    width: 60px;
    margin: 0 15px 0 13px;
    text-align: center;
    line-height: 23px;
}
.speaker {
    margin: 0 13px 0 12px;
}
.clock {
    width: 118px;
    margin-top: -2px;
    text-align: right;
    line-height: 23px;
}
```
